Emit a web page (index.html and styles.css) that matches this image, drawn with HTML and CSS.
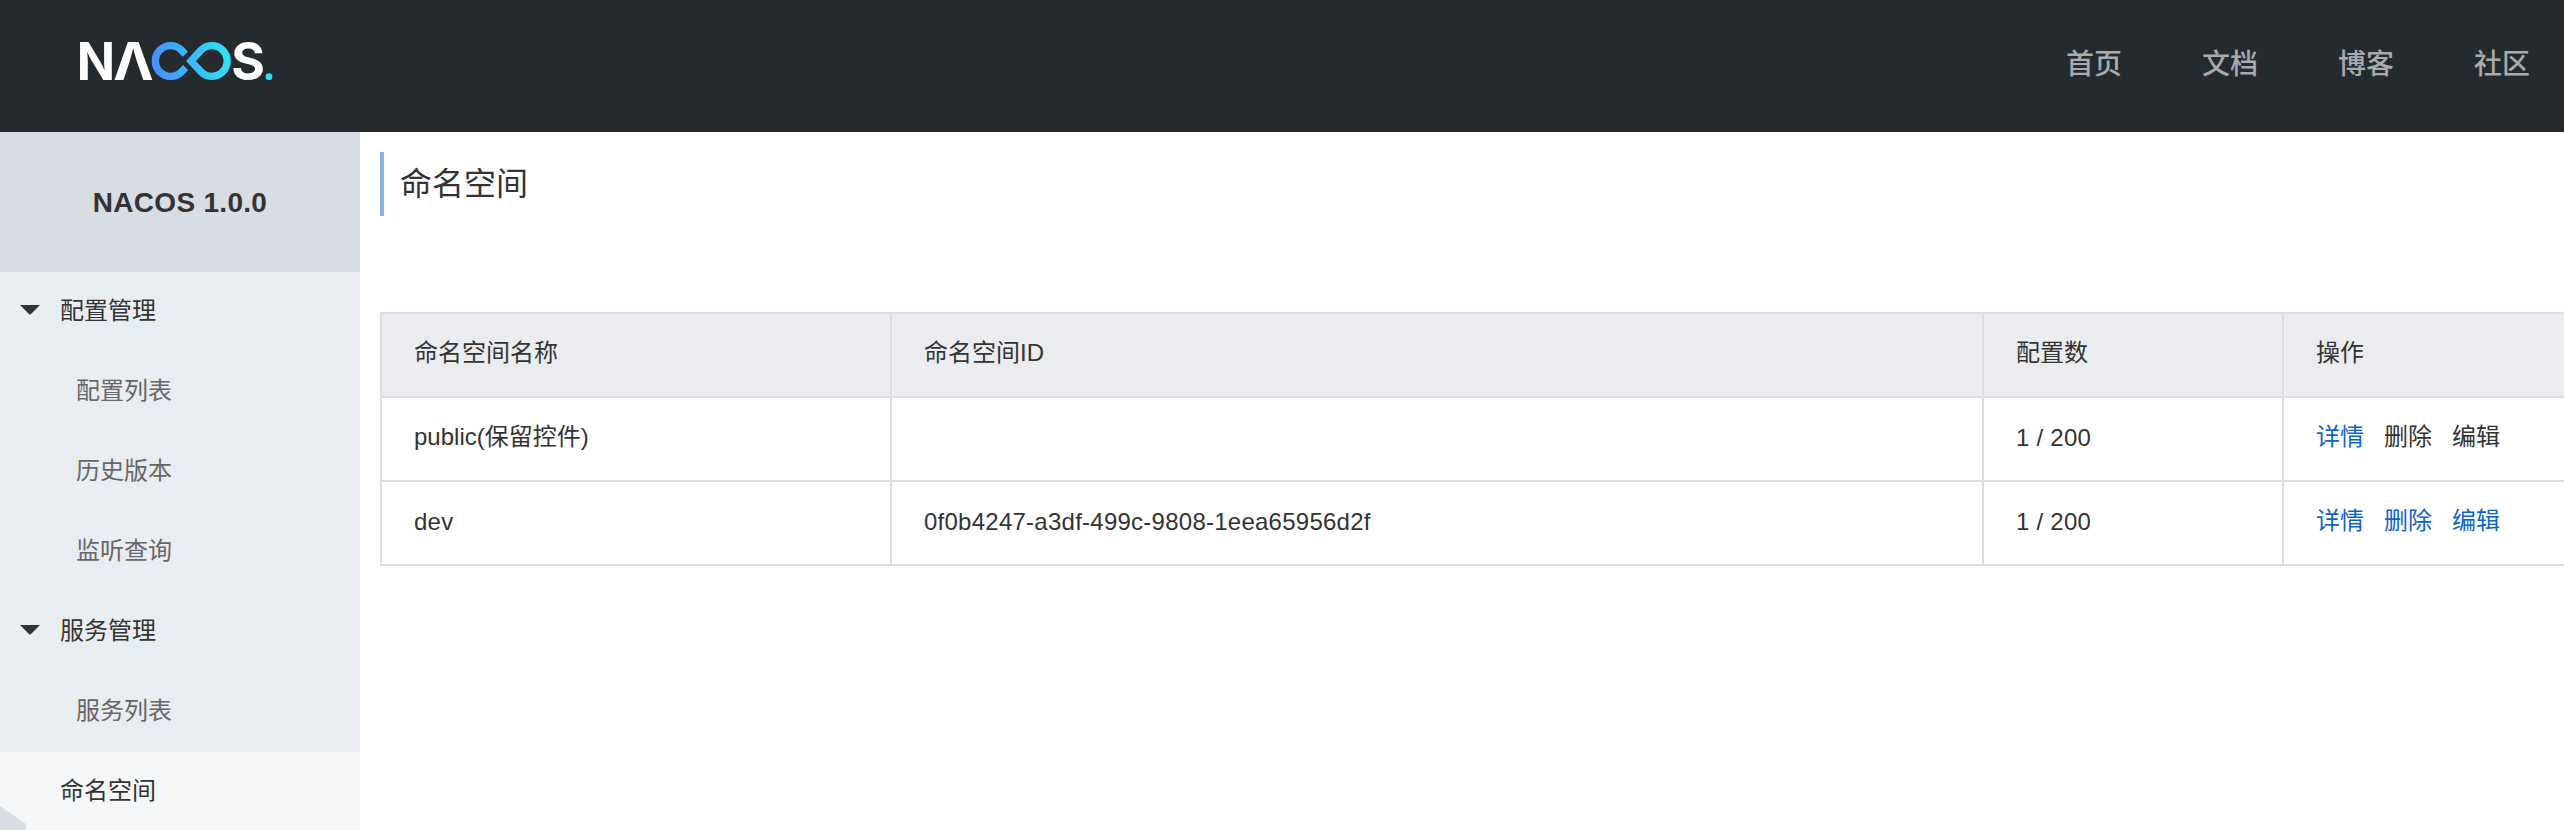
FILE: index.html
```html
<!DOCTYPE html>
<html lang="zh-CN">
<head>
<meta charset="utf-8">
<title>Nacos</title>
<link rel="stylesheet" href="styles.css">
</head>
<body>
<header class="header">
  <svg class="logo" viewBox="60 60 582 126" role="img" aria-label="Nacos">
    <defs>
      <linearGradient id="loop" gradientUnits="userSpaceOnUse" x1="290" y1="150" x2="505" y2="110">
        <stop offset="0" stop-color="#4891ff"/>
        <stop offset="1" stop-color="#2ee3f4"/>
      </linearGradient>
    </defs>
    <g class="logo-text">
      <text x="50" y="180" textLength="115" lengthAdjust="spacingAndGlyphs">N</text>
      <text x="160" y="180" textLength="121" lengthAdjust="spacingAndGlyphs">Λ</text>
      <text x="514" y="179" textLength="101" lengthAdjust="spacingAndGlyphs">S</text>
    </g>
    <g fill="none" stroke="url(#loop)" stroke-width="22">
      <path d="M376 103L364.5 90.500A46 46 0 1 0 364.500 155.500L377 143"/>
      <path d="M393 123L422 91.500A46 46 0 1 1 422 154.500Z"/>
    </g>
    <circle cx="627" cy="170" r="10" fill="#2ee0f4"/>
  </svg>
  <nav class="nav">
    <a>首页</a><a>文档</a><a>博客</a><a>社区</a>
  </nav>
</header>
<div class="body">
  <aside class="sidebar">
    <h1 class="product">NACOS 1.0.0</h1>
    <ul class="menu">
      <li class="item group">配置管理</li>
      <li class="item sub">配置列表</li>
      <li class="item sub">历史版本</li>
      <li class="item sub">监听查询</li>
      <li class="item group">服务管理</li>
      <li class="item sub">服务列表</li>
      <li class="item selected">命名空间</li>
    </ul>
    <svg class="corner" viewBox="0 0 26 24"><path d="M0 0L26 18V24H0Z" fill="#d8dde4"/></svg>
  </aside>
  <main class="main">
    <h2 class="title">命名空间</h2>
    <table class="table">
      <colgroup><col class="c-name"><col class="c-id"><col class="c-count"><col></colgroup>
      <thead>
        <tr><th>命名空间名称</th><th>命名空间ID</th><th>配置数</th><th>操作</th></tr>
      </thead>
      <tbody>
        <tr>
          <td>public(保留控件)</td><td></td><td class="latin">1 / 200</td>
          <td><div class="actions"><a class="link">详情</a><span>删除</span><span>编辑</span></div></td>
        </tr>
        <tr>
          <td class="latin">dev</td><td class="latin">0f0b4247-a3df-499c-9808-1eea65956d2f</td><td class="latin">1 / 200</td>
          <td><div class="actions"><a class="link">详情</a><a class="link">删除</a><a class="link">编辑</a></div></td>
        </tr>
      </tbody>
    </table>
  </main>
</div>
</body>
</html>
```
FILE: styles.css
```css
* { box-sizing: border-box; }
body {
  margin: 0;
  height: 830px;
  overflow: hidden;
  display: flex;
  flex-direction: column;
  background: #fff;
  color: #333;
  font: 24px/36px "Liberation Sans", "Noto Sans CJK SC", sans-serif;
}
.header {
  flex: none;
  height: 132px;
  padding: 0 34px 0 80px;
  display: flex;
  justify-content: space-between;
  background: #252a2f;
}
.logo { width: 194px; height: 42px; margin-top: 40px; overflow: visible; }
.logo-text { fill: #fff; font: 700 157px Inter, sans-serif; }
.nav {
  display: flex;
  gap: 80px;
  padding-top: 45px;
  font-size: 28px;
  font-weight: 500;
  line-height: 40px;
  color: #a8aaac;
}
.body { flex: 1; min-height: 0; display: flex; }
.sidebar {
  position: relative;
  flex: none;
  width: 360px;
  overflow: hidden;
  background: #e9edf2;
}
.product {
  margin: 0;
  height: 140px;
  background: #d8dde4;
  font-size: 28px;
  letter-spacing: 0.3px;
  line-height: 141px;
  text-align: center;
}
.menu { margin: 0; padding: 0; list-style: none; }
.item {
  height: 80px;
  padding-left: 60px;
  line-height: 78px;
}
.group {
  display: flex;
  padding-left: 20px;
  gap: 20px;
}
.group::before {
  content: "";
  margin-top: 33px;
  width: 20px;
  height: 10px;
  background: #333;
  clip-path: polygon(0 0, 100% 0, 50% 100%);
}
.sub { padding-left: 76px; color: #666; }
.selected { background: #f4f6f8; }
.corner {
  position: absolute;
  left: 0;
  bottom: 0;
  width: 26px;
  height: 24px;
}
.main {
  flex: 1;
  min-width: 0;
  padding: 20px 0 0 20px;
  overflow: hidden;
}
.title {
  margin: 0 0 96px;
  height: 64px;
  padding-left: 16px;
  border-left: 4px solid #89b6e0;
  font-size: 32px;
  font-weight: 400;
  line-height: 64px;
}
.table {
  width: 100%;
  table-layout: fixed;
  border-collapse: separate;
  border-spacing: 0;
  border: solid #dcdde3;
  border-width: 2px 0 0 2px;
}
.c-name { width: 510px; }
.c-id { width: 1092px; }
.c-count { width: 300px; }
.table th, .table td {
  height: 84px;
  padding: 0 32px 4px;
  border: solid #dcdde3;
  border-width: 0 2px 2px 0;
  font-weight: 400;
  text-align: left;
  vertical-align: middle;
}
.table th { background: #ebecf0; }
.table .latin { padding-bottom: 2px; letter-spacing: 0.25px; }
.table th:last-child, .table td:last-child { border-right: 0; }
.actions { display: flex; gap: 20px; }
.link { color: #0f64cc; }
```
